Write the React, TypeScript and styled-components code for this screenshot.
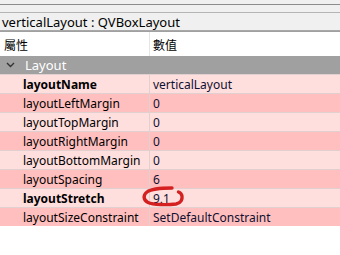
import styled, { createGlobalStyle } from "styled-components";

const GlobalStyle = createGlobalStyle`
  html, body {
    margin: 0;
    padding: 0;
    background: #ffffff;
  }
  body {
    font-family: "Noto Sans", "Noto Sans CJK TC", sans-serif;
    font-size: 12px;
    color: #000;
  }
`;

const Panel = styled.div`
  position: relative;
  width: 340px;
  height: 255px;
  background: #fff;
  display: flex;
  flex-direction: column;
`;
const Strip = styled.div<{ $h: number; $line: string }>`
  height: ${(p) => p.$h}px;
  background: #f0f0f0;
  border-bottom: 1px solid ${(p) => p.$line};
`;
const ObjectBar = styled.div`
  height: 16px;
  background: #f0f0f0;
  border-bottom: 1px solid #a8a8a8;
  display: flex;
  align-items: center;
  padding: 1px 0 0 2px;
  font-size: 13px;
`;
const Header = styled.div`
  height: 25px;
  border-top: 1px solid #a0a0a0;
  display: grid;
  grid-template-columns: 150px 1fr;
  background: #fff;
  box-sizing: border-box;
`;
const HeaderCell = styled.div<{ $sep?: boolean }>`
  display: flex;
  align-items: center;
  padding-left: ${(p) => (p.$sep ? 4 : 3)}px;
  border-right: ${(p) => (p.$sep ? "1px solid #e5e5e5" : "none")};
  font-family: "Noto Sans CJK TC", sans-serif;
  font-size: 12px;
`;
const GroupRow = styled.div`
  height: 18px;
  background: #a0a0a0;
  color: #fff;
  display: flex;
  align-items: center;
  gap: 10px;
  padding-left: 6px;
  font-size: 13px;
`;
const Row = styled.div<{ $dark: boolean }>`
  height: 19px;
  box-sizing: border-box;
  display: grid;
  grid-template-columns: 150px 1fr;
  background: ${(p) => (p.$dark ? "#ffbfbf" : "#ffdede")};
  border-top: 1px solid #e2d0d0;
`;
const NameCell = styled.div<{ $bold: boolean }>`
  display: flex;
  align-items: center;
  padding-left: 23px;
  border-right: 1px solid #e2d0d0;
  font-weight: ${(p) => (p.$bold ? 700 : 400)};
`;
const ValueCell = styled.div`
  display: flex;
  align-items: center;
  padding-left: 3px;
  color: #101030;
`;
const Mark = styled.svg`
  position: absolute;
  left: 0;
  top: 0;
  pointer-events: none;
`;

const rows = [
  { name: "layoutName", value: "verticalLayout", bold: true },
  { name: "layoutLeftMargin", value: "0" },
  { name: "layoutTopMargin", value: "0" },
  { name: "layoutRightMargin", value: "0" },
  { name: "layoutBottomMargin", value: "0" },
  { name: "layoutSpacing", value: "6" },
  { name: "layoutStretch", value: "9,1", bold: true },
  { name: "layoutSizeConstraint", value: "SetDefaultConstraint" },
];

export default function App() {
  return (
    <Panel>
      <GlobalStyle />
      <Strip $h={4} $line="#8c8c8c" />
      <Strip $h={7} $line="#b4b4b4" />
      <ObjectBar>verticalLayout : QVBoxLayout</ObjectBar>
      <Header>
        <HeaderCell $sep>屬性</HeaderCell>
        <HeaderCell>數值</HeaderCell>
      </Header>
      <GroupRow>
        <svg width="9" height="6" viewBox="0 0 9 6">
          <polyline points="1,1 4.5,4.5 8,1" fill="none" stroke="#333" strokeWidth="1.4" />
        </svg>
        Layout
      </GroupRow>
      {rows.map((r, i) => (
        <Row key={r.name} $dark={i % 2 === 1}>
          <NameCell $bold={!!r.bold}>{r.name}</NameCell>
          <ValueCell>{r.value}</ValueCell>
        </Row>
      ))}
      <Mark width="340" height="255">
        <path
          d="M172,188 C162,188 151,189 147,192 C143,195 143,200 148,202.5 C153,205 168,205 176,204 C181,203 182.5,199 182,196 C181.5,193.5 180,192.5 178.5,192"
          fill="none"
          stroke="#d42020"
          strokeWidth="3.4"
          strokeLinecap="round"
        />
      </Mark>
    </Panel>
  );
}
